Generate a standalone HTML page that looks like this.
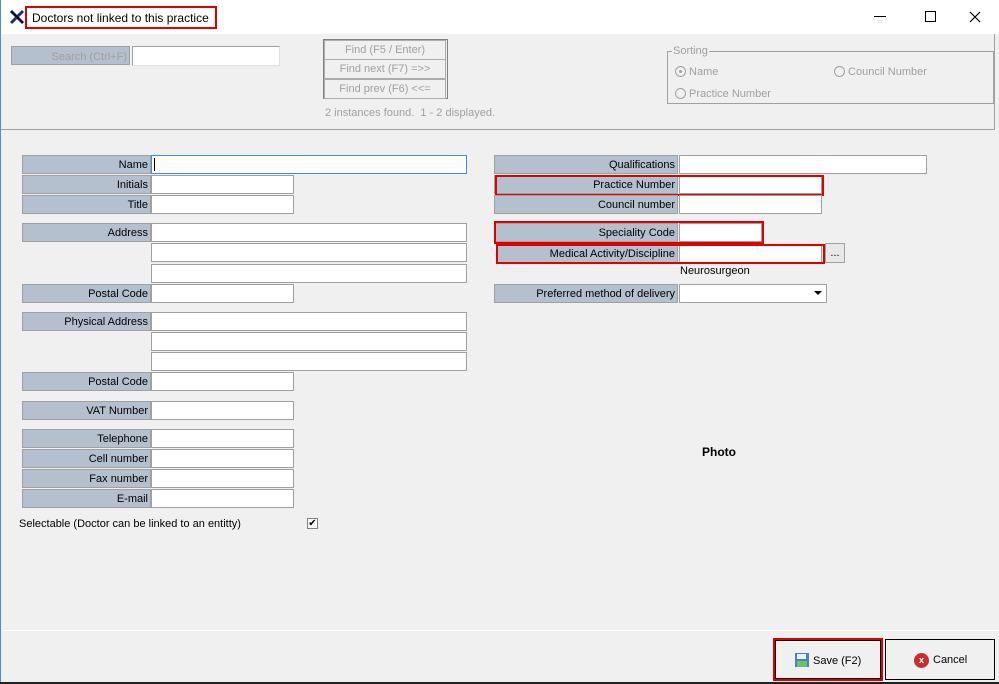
<!DOCTYPE html>
<html><head><meta charset="utf-8"><style>
*{box-sizing:border-box}
body{margin:0;width:999px;height:684px;background:#f0f0f0;font-family:"Liberation Sans",Tahoma,sans-serif;font-size:11px;color:#000;position:relative;overflow:hidden}
.a{position:absolute}
.l{position:absolute;background:#b4c0ce;border:1px solid #a0a0a0;text-align:right;padding-right:2px;line-height:19px;height:19px}
.f{position:absolute;background:#fff;border:1px solid #a0a0a0;height:19px}
.r{position:absolute;border:2px solid #e00000}
.g{color:#a0a0a0}
.btn{position:absolute;border:1px solid #adadad;background:#f0f0f0;color:#a0a0a0;text-align:center;line-height:19px;height:20px}
</style></head><body>
<div class="a" style="left:0;top:0;width:999px;height:34px;background:#fff"></div>
<div class="a" style="left:0;top:0;width:1px;height:684px;background:#4a8fd6"></div>
<svg class="a" style="left:9px;top:9px" width="16" height="16" viewBox="0 0 16 16"><path d="M2 2L14 14M14 2L2 14" stroke="#1a2a8a" stroke-width="3"/><path d="M2 2L14 14" stroke="#000" stroke-width="1.5"/></svg>
<div class="a" style="left:25px;top:6px;width:192px;height:23px;border:2px solid #e00000;padding-left:5px;line-height:21px;font-size:12px">Doctors not linked to this practice</div>
<div class="a" style="left:874px;top:16px;width:12px;height:1px;background:#000"></div>
<div class="a" style="left:925px;top:11px;width:11px;height:11px;border:1px solid #000"></div>
<svg class="a" style="left:969px;top:11px" width="12" height="12" viewBox="0 0 12 12"><path d="M1 1L11 11M11 1L1 11" stroke="#000" stroke-width="1.2"/></svg>
<!-- top panel -->
<div class="a" style="left:1px;top:34px;width:994px;height:96px;border-right:1px solid #a0a0a0;border-bottom:1px solid #a0a0a0"></div>
<div class="l g" style="left:11px;top:46px;width:119px;height:19px;color:#a0a0a0;line-height:20px">Search (Ctrl+F)</div>
<div class="f" style="left:132px;top:46px;width:148px;height:20px;border-color:#a0a0a0 #e0e0e0 #e0e0e0 #a0a0a0"></div>
<div class="a" style="left:323px;top:39px;width:125px;height:60px;border:1px solid #808080"></div>
<div class="btn" style="left:324px;top:40px;width:122px">Find (F5 / Enter)</div>
<div class="btn" style="left:324px;top:59px;width:122px">Find next (F7) =&gt;&gt;</div>
<div class="btn" style="left:324px;top:79px;width:122px">Find prev (F6) &lt;&lt;=</div>
<div class="a g" style="left:325px;top:107px">2 instances found.&nbsp; 1 - 2 displayed.</div>
<div class="a" style="left:667px;top:51px;width:327px;height:53px;border:1px solid #a0a0a0"></div>
<div class="a g" style="left:672px;top:45px;background:#f0f0f0;padding:0 1px">Sorting</div>
<div class="a g" style="left:675px;top:66px"><span style="display:inline-block;width:11px;height:11px;border:1px solid #a0a0a0;border-radius:50%;vertical-align:-2px;position:relative"><span style="position:absolute;left:3px;top:3px;width:3px;height:3px;background:#a0a0a0;border-radius:50%"></span></span> Name</div>
<div class="a g" style="left:834px;top:66px"><span style="display:inline-block;width:11px;height:11px;border:1px solid #a0a0a0;border-radius:50%;vertical-align:-2px"></span> Council Number</div>
<div class="a g" style="left:675px;top:88px"><span style="display:inline-block;width:11px;height:11px;border:1px solid #a0a0a0;border-radius:50%;vertical-align:-2px"></span> Practice Number</div>
<!-- left form -->
<div class="l" style="left:22px;top:155px;width:129px">Name</div><div class="f" style="left:151px;top:155px;width:316px;border-color:#3c8ee0"><div style="position:absolute;left:2px;top:2px;width:1px;height:13px;background:#000"></div></div>
<div class="l" style="left:22px;top:175px;width:129px">Initials</div><div class="f" style="left:151px;top:175px;width:143px"></div>
<div class="l" style="left:22px;top:195px;width:129px">Title</div><div class="f" style="left:151px;top:195px;width:143px"></div>
<div class="l" style="left:22px;top:223px;width:129px">Address</div><div class="f" style="left:151px;top:223px;width:316px"></div>
<div class="f" style="left:151px;top:243px;width:316px"></div>
<div class="f" style="left:151px;top:264px;width:316px"></div>
<div class="l" style="left:22px;top:284px;width:129px">Postal Code</div><div class="f" style="left:151px;top:284px;width:143px"></div>
<div class="l" style="left:22px;top:312px;width:129px">Physical Address</div><div class="f" style="left:151px;top:312px;width:316px"></div>
<div class="f" style="left:151px;top:332px;width:316px"></div>
<div class="f" style="left:151px;top:352px;width:316px"></div>
<div class="l" style="left:22px;top:372px;width:129px">Postal Code</div><div class="f" style="left:151px;top:372px;width:143px"></div>
<div class="l" style="left:22px;top:401px;width:129px">VAT Number</div><div class="f" style="left:151px;top:401px;width:143px"></div>
<div class="l" style="left:22px;top:429px;width:129px">Telephone</div><div class="f" style="left:151px;top:429px;width:143px"></div>
<div class="l" style="left:22px;top:449px;width:129px">Cell number</div><div class="f" style="left:151px;top:449px;width:143px"></div>
<div class="l" style="left:22px;top:469px;width:129px">Fax number</div><div class="f" style="left:151px;top:469px;width:143px"></div>
<div class="l" style="left:22px;top:489px;width:129px">E-mail</div><div class="f" style="left:151px;top:489px;width:143px"></div>
<div class="a" style="left:19px;top:518px">Selectable (Doctor can be linked to an entitty)</div>
<div class="a" style="left:307px;top:518px;width:11px;height:11px;border:1px solid #808080;background:#fff;font-size:10px;line-height:9px;text-align:center">✔</div>
<!-- right form -->
<div class="l" style="left:494px;top:155px;width:184px">Qualifications</div><div class="f" style="left:679px;top:155px;width:248px"></div>
<div class="l" style="left:494px;top:175px;width:184px">Practice Number</div><div class="f" style="left:679px;top:175px;width:143px"></div>
<div class="r" style="left:495px;top:175px;width:329px;height:21px"></div>
<div class="l" style="left:494px;top:195px;width:184px">Council number</div><div class="f" style="left:679px;top:195px;width:143px"></div>
<div class="l" style="left:494px;top:223px;width:184px">Speciality Code</div><div class="f" style="left:679px;top:223px;width:83px"></div>
<div class="r" style="left:494px;top:221px;width:270px;height:23px"></div>
<div class="l" style="left:497px;top:244px;width:181px">Medical Activity/Discipline</div><div class="f" style="left:679px;top:244px;width:143px"></div>
<div class="r" style="left:496px;top:244px;width:329px;height:20px"></div>
<div class="a" style="left:825px;top:243px;width:20px;height:20px;border:1px solid #a0a0a0;background:#e8e8e8;text-align:center;line-height:18px">...</div>
<div class="a" style="left:680px;top:265px">Neurosurgeon</div>
<div class="l" style="left:494px;top:284px;width:184px">Preferred method of delivery</div><div class="f" style="left:679px;top:284px;width:148px"><div style="position:absolute;right:4px;top:6px;width:0;height:0;border-left:4px solid transparent;border-right:4px solid transparent;border-top:4px solid #000"></div></div>
<div class="a" style="left:702px;top:445px;font-weight:bold;font-size:12px">Photo</div>
<!-- bottom -->
<div class="a" style="left:3px;top:630px;width:996px;height:1px;background:#fff"></div>
<div class="a" style="left:773px;top:638px;width:110px;height:43px;border:2px solid #e00000;outline:1px solid #000;outline-offset:-3px;line-height:42px;padding-left:38px;font-size:11px">Save (F2)</div>
<svg class="a" style="left:794px;top:652px" width="16" height="16" viewBox="0 0 16 16"><rect x="1" y="1" width="14" height="14" fill="#4a7fc0"/><rect x="3" y="2" width="9" height="5" fill="#e8f0f8"/><rect x="3" y="9" width="10" height="6" fill="#6cc06c"/></svg>
<div class="a" style="left:885px;top:639px;width:110px;height:41px;border:1px solid #000;line-height:41px;padding-left:47px">Cancel</div>
<div class="a" style="left:914px;top:653px;width:15px;height:15px;border-radius:50%;background:#c83030;color:#fff;font-size:9px;line-height:15px;text-align:center;font-weight:bold">x</div>
<div class="a" style="left:0;top:682px;width:999px;height:2px;background:#222"></div>
</body></html>
